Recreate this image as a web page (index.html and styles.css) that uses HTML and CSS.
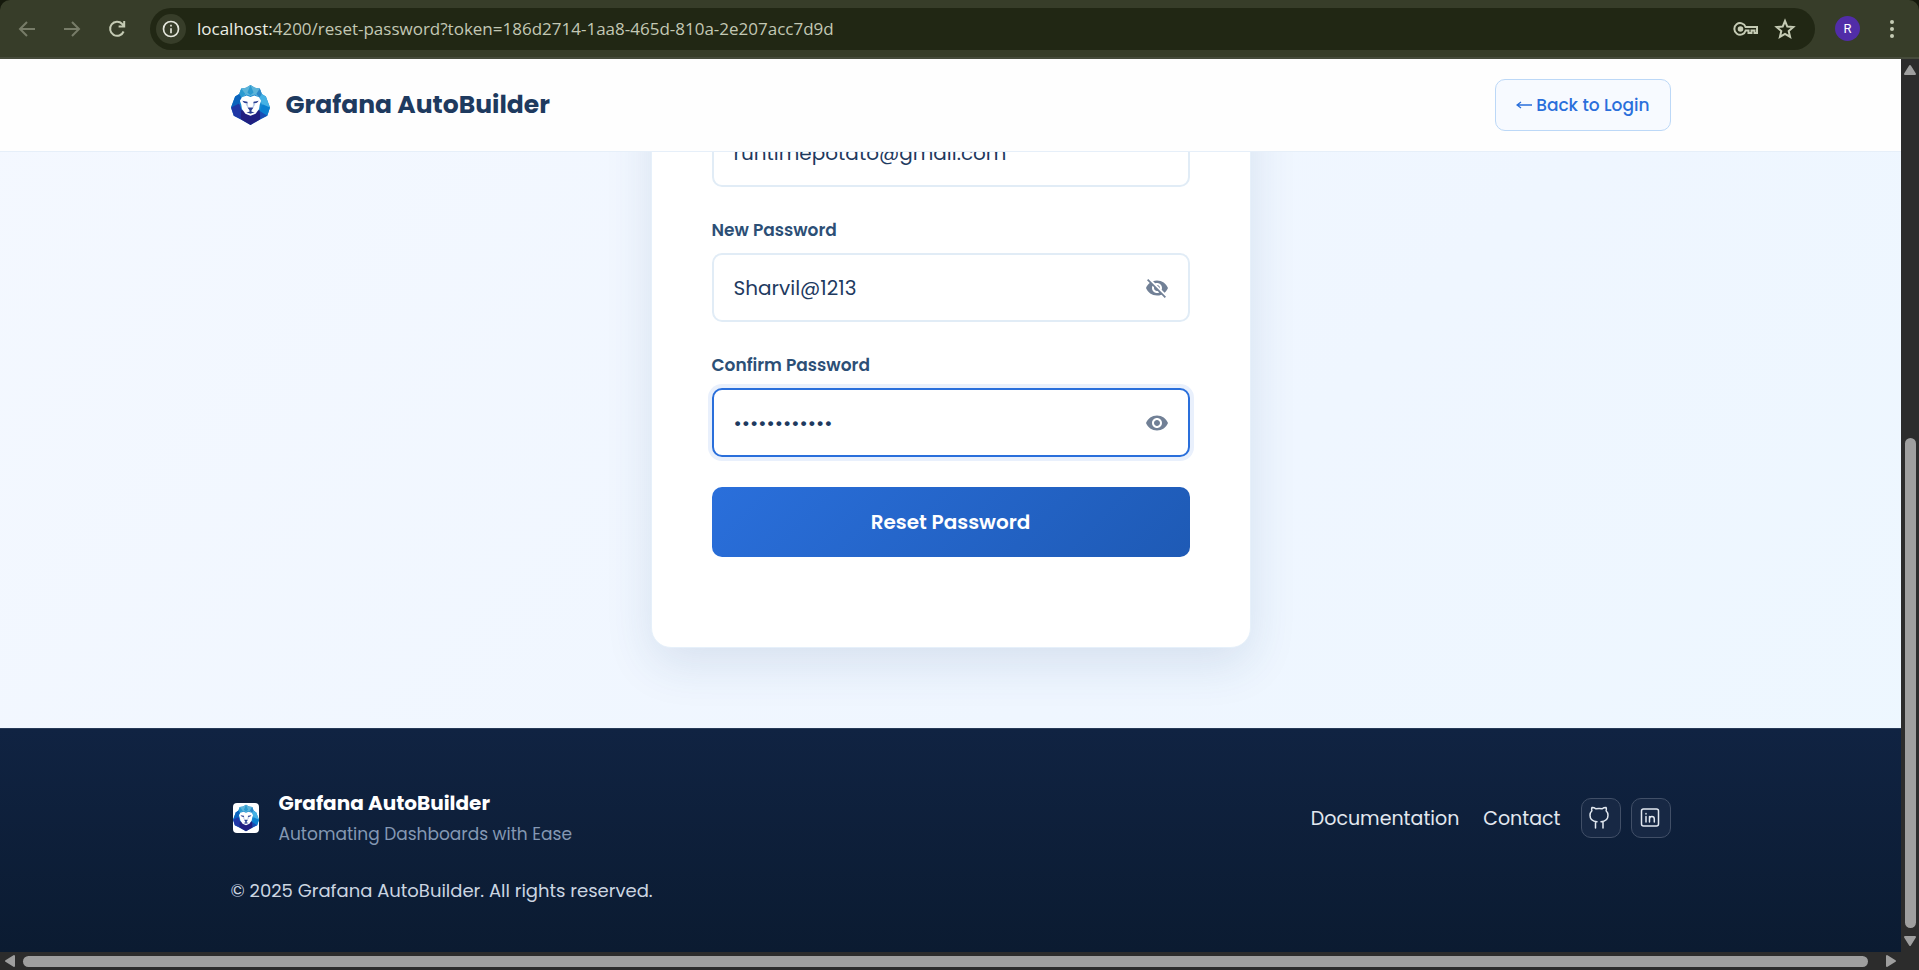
FILE: index.html
```html
<!DOCTYPE html>
<html lang="en">
<head>
<meta charset="utf-8">
<meta name="viewport" content="width=device-width, initial-scale=1">
<title>Grafana AutoBuilder</title>
<link rel="stylesheet" href="styles.css">
</head>
<body>
<svg class="defs" aria-hidden="true">
  <symbol id="lion" viewBox="0 0 114 117">
    <path fill="#1687cf" d="M57 0 70 8 84 10 90 26 102 34 114 66 106 90 86 100 57 117 28 100 8 90 0 66 12 34 24 26 30 10 44 8Z"/>
    <path fill="#5db4d9" d="M57 0 70 8 84 10 90 26 84 38 70 28 57 32 44 28 30 38 24 26 30 10 44 8Z"/>
    <path fill="#2b9ad0" d="M57 0 66 22 57 30 48 22ZM30 10 42 26 30 38 24 26Z"/>
    <path fill="#2a86c8" d="M84 10 74 26 84 38 90 26Z"/>
    <path fill="#0a63bd" d="M24 26 31 38 22 60 0 66 12 34Z"/>
    <path fill="#45b1e4" d="M90 26 83 38 92 62 114 66 102 34Z"/>
    <path fill="#0b7fd0" d="M92 56 114 66 106 90 84 80Z"/>
    <path fill="#1f37a5" d="M0 66 24 54 34 80 28 100 8 90Z"/>
    <path fill="#1a4db5" d="M84 76 106 90 86 100Z"/>
    <path fill="#211f80" d="M30 74 84 74 86 100 57 117 28 100Z"/>
    <path fill="#fff" d="M32 36 46 31 57 35 68 31 82 36 88 46 84 58 82 70 72 84 57 90 42 84 32 70 30 58 26 46Z"/>
    <path fill="#2a3f92" d="M33 46 48 49 49 55 38 52ZM81 46 66 49 65 55 76 52ZM48 66H66L60 74V78L69 80 57 84 45 80 54 78V74Z"/>
    <path fill="#b9cdea" d="M48 52 51 64H48L43 57ZM66 52 63 64H66L71 57Z"/>
  </symbol>
</svg>

<div class="toolbar">
  <nav class="toolbar-nav" aria-label="Browser">
    <button class="tool dim" aria-label="Back"><svg viewBox="0 0 24 24"><path d="M20 12H5M12 5l-7 7 7 7"/></svg></button>
    <button class="tool dim" aria-label="Forward"><svg viewBox="0 0 24 24"><path d="M4 12h15M12 5l7 7-7 7"/></svg></button>
    <button class="tool" aria-label="Reload"><svg viewBox="0 0 24 24"><path d="M18.600 14.500a7 7 0 1 1-1.400-7.500L19 8.800M19.200 4v5.600h-5.600"/></svg></button>
  </nav>
  <div class="address">
    <button class="site-info" aria-label="Site information"><svg viewBox="0 0 24 24"><circle cx="12" cy="12" r="9"/><path d="M12 11v6M12 7v2"/></svg></button>
    <div class="url"><span class="host">localhost:</span>4200/reset-password?token=186d2714-1aa8-465d-810a-2e207acc7d9d</div>
    <button class="tool" aria-label="Passwords"><svg class="key" viewBox="0 0 26 24"><path d="M12.600 10H24v6h-2.500v-2.500h-3V16h-3v-2.500h-2.800A5.800 5.800 0 1 1 12.600 10Z"/><circle cx="7.500" cy="12" r="1.800" fill="currentColor"/></svg></button>
    <button class="tool" aria-label="Bookmark"><svg viewBox="0 0 24 24"><path d="m12 4 2.300 5.600 6 .5-4.600 3.900 1.400 5.900L12 16.800l-5.100 3.100 1.400-5.900-4.600-3.900 6-.5Z"/></svg></button>
  </div>
  <button class="avatar" aria-label="Profile">R</button>
  <button class="tool" aria-label="Menu"><svg viewBox="0 0 24 24"><g fill="currentColor" stroke="none"><circle cx="12" cy="5" r="2"/><circle cx="12" cy="12" r="2"/><circle cx="12" cy="19" r="2"/></g></svg></button>
</div>

<div class="viewport">
  <div class="page">
    <header class="site-header">
      <div class="container header-row">
        <div class="brand"><svg class="brand-logo"><use href="#lion"/></svg><span class="brand-name">Grafana AutoBuilder</span></div>
        <a class="back-link" href="#"><svg viewBox="0 0 16 12"><path d="M16 6H1M5 3 1 6l4 3"/></svg>Back to Login</a>
      </div>
    </header>

    <main class="main">
      <form class="card">
        <div class="group">
          <div class="field"><input type="email" aria-label="Email" value="runtimepotato@gmail.com"></div>
        </div>
        <div class="group">
          <label for="new-password">New Password</label>
          <div class="field">
            <input id="new-password" type="text" value="Sharvil@1213">
            <button type="button" class="toggle" aria-label="Hide password"><svg viewBox="0 0 24 24"><path d="M12 7c2.760 0 5 2.240 5 5 0 .65-.13 1.260-.36 1.830l2.920 2.920c1.510-1.260 2.700-2.890 3.430-4.750-1.730-4.390-6-7.500-11-7.500-1.400 0-2.740.25-3.980.7l2.160 2.160C10.740 7.130 11.350 7 12 7zM2 4.270l2.280 2.280.46.46C3.080 8.300 1.780 10.020 1 12c1.730 4.390 6 7.500 11 7.500 1.550 0 3.030-.3 4.380-.84l.42.42L19.730 22 21 20.730 3.270 3 2 4.270zM7.530 9.800l1.550 1.550c-.05.21-.08.43-.08.65 0 1.660 1.340 3 3 3 .22 0 .44-.03.65-.08l1.550 1.550c-.67.33-1.410.53-2.200.53-2.760 0-5-2.240-5-5 0-.79.2-1.530.53-2.200zm4.310-.78l3.150 3.150.02-.16c0-1.660-1.340-3-3-3l-.17.01z"/></svg></button>
          </div>
        </div>
        <div class="group">
          <label for="confirm-password">Confirm Password</label>
          <div class="field active">
            <input id="confirm-password" type="password" value="Sharvil@1213">
            <button type="button" class="toggle" aria-label="Show password"><svg viewBox="0 0 24 24"><path d="M12 4.500C7 4.500 2.730 7.610 1 12c1.730 4.390 6 7.500 11 7.500s9.270-3.110 11-7.500c-1.730-4.390-6-7.500-11-7.500zM12 17c-2.760 0-5-2.240-5-5s2.240-5 5-5 5 2.240 5 5-2.240 5-5 5zm0-8c-1.660 0-3 1.340-3 3s1.340 3 3 3 3-1.340 3-3-1.340-3-3-3z"/></svg></button>
          </div>
        </div>
        <button type="submit" class="submit">Reset Password</button>
      </form>
    </main>

    <footer class="site-footer">
      <div class="container footer-inner">
        <div class="footer-row">
          <div class="footer-brand">
            <span class="footer-logo"><svg><use href="#lion"/></svg></span>
            <div class="footer-text">
              <div class="footer-name">Grafana AutoBuilder</div>
              <div class="tagline">Automating Dashboards with Ease</div>
            </div>
          </div>
          <nav class="footer-links" aria-label="Footer">
            <a class="text-link" href="#">Documentation</a>
            <a class="text-link" href="#">Contact</a>
            <span class="socials">
              <a class="social" href="#" aria-label="GitHub"><svg viewBox="0 0 38 38"><path d="M13.500 29v-6.300H15C10.500 22.500 8 19.800 8 16.300c0-1.900.7-3.300 1.900-4.500-.5-1.100-.4-2.300 0-3.300 1.700-.1 2.900.5 4.100 1.300 2.100-.5 4-.5 6 0 1.200-.8 2.400-1.400 4.100-1.300.4 1 .5 2.200 0 3.300 1.200 1.200 1.900 2.600 1.900 4.500 0 3.500-2.500 6.200-7 6.400H21V29"/></svg></a>
              <a class="social" href="#" aria-label="LinkedIn"><svg viewBox="0 0 38 38"><rect x="9.500" y="10" width="17" height="17" rx="2"/><path d="M14 17.500V23M14 14.500v.4M17.500 23v-5.500M17.500 20c0-3.300 4.800-3.300 4.800 0v3"/></svg></a>
            </span>
          </nav>
        </div>
        <div class="copyright">© 2025 Grafana AutoBuilder. All rights reserved.</div>
      </div>
    </footer>
  </div>
  <div class="scroll vertical" aria-hidden="true">
    <svg class="arrow" viewBox="0 0 14 12"><path d="M7 2 12 10H2Z"/></svg>
    <span class="track-space"></span><span class="thumb"></span>
    <svg class="arrow" viewBox="0 0 14 12"><path d="M2 2H12L7 10Z"/></svg>
  </div>
  <div class="scroll horizontal" aria-hidden="true">
    <svg class="arrow" viewBox="0 0 12 14"><path d="M2 7 10 2V12Z"/></svg>
    <span class="thumb"></span>
    <svg class="arrow" viewBox="0 0 12 14"><path d="M10 7 2 2V12Z"/></svg>
  </div>
  <div class="corner"></div>
</div>
</body>
</html>
```

FILE: styles.css
```css
* { box-sizing: border-box; }

body {
  margin: 0;
  height: 100vh;
  display: flex;
  flex-direction: column;
  overflow: hidden;
  background: #15190c;
  font-family: Poppins, Inter, sans-serif;
}

button { font: inherit; border: 0; padding: 0; background: none; color: inherit; }
a { text-decoration: none; }
svg { display: block; }
.defs { position: absolute; width: 0; height: 0; }

/* Browser toolbar */
.toolbar {
  flex: none;
  height: 59px;
  display: flex;
  align-items: center;
  gap: 20px;
  padding: 0 15px;
  background: #373d29;
  border-bottom: 2px solid #464b3b;
  border-radius: 10px 10px 0 0;
  color: #c5cbb4;
}
.toolbar-nav { display: flex; gap: 21px; margin-right: 1px; }
.tool svg {
  width: 24px;
  height: 24px;
  fill: none;
  stroke: currentColor;
  stroke-width: 2;
}
.tool .key { width: 26px; }
.dim { color: #777c68; }
.address {
  flex: 1;
  height: 42px;
  display: flex;
  align-items: center;
  gap: 14px;
  padding: 0 18px 0 6px;
  border-radius: 21px;
  background: #212714;
}
.site-info {
  width: 30px;
  height: 30px;
  display: grid;
  place-items: center;
  border-radius: 50%;
  background: #373d29;
  color: #e4e6dc;
}
.site-info svg { width: 20px; height: 20px; fill: none; stroke: currentColor; stroke-width: 2; }
.url {
  flex: 1;
  font-family: "Segoe UI", "Open Sans", sans-serif;
  font-size: 17px;
  color: #c3c8b4;
  white-space: nowrap;
  margin-left: -3px;
}
.host { color: #eceee5; }
.avatar {
  width: 25px;
  height: 25px;
  border-radius: 50%;
  background: #512da8;
  color: #fff;
  font-family: Roboto, sans-serif;
  font-size: 13px;
}

/* Page area with its scroll bars */
.viewport {
  flex: 1;
  min-height: 0;
  display: grid;
  grid-template: minmax(0, 1fr) 18px / minmax(0, 1fr) 18px;
}
.page {
  display: flex;
  flex-direction: column;
  min-height: 0;
  overflow: hidden;
  background: linear-gradient(135deg, #f4f8ff 0%, #eff6ff 60%, #edf7ff 100%);
}
.container { width: 100%; max-width: 1440px; margin: 0 auto; }

.site-header { flex: none; background: #fefefe; border-bottom: 1px solid #e6eff9; }
.header-row {
  display: flex;
  align-items: center;
  justify-content: space-between;
  padding: 20px 0;
}
.brand { display: flex; align-items: center; gap: 16px; }
.brand-logo { width: 39px; height: 40px; }
.brand-name { font-size: 25px; font-weight: 700; color: #1e3a5f; }
.back-link {
  height: 52px;
  display: flex;
  align-items: center;
  gap: 4px;
  padding: 0 20px;
  border: 1px solid #bcd8f7;
  border-radius: 10px;
  background: #f7faff;
  color: #2a6fdb;
  font-size: 17px;
  font-weight: 500;
}
.back-link svg { width: 16px; height: 12px; fill: none; stroke: currentColor; stroke-width: 1.3; }

.main {
  flex: 1;
  min-height: 0;
  display: flex;
  flex-direction: column;
  justify-content: flex-end;
  align-items: center;
  padding-bottom: 80px;
  overflow: hidden;
}
.card {
  flex: none;
  width: 600px;
  max-width: 100%;
  padding: 60px 60px 90px;
  background: #fff;
  border: 1px solid #e6f0fa;
  border-radius: 20px;
  box-shadow: 0 16px 48px rgba(30, 70, 120, 0.12);
}
.group { margin-bottom: 30px; }
.group label {
  display: block;
  margin-bottom: 10px;
  line-height: 26px;
  font-size: 17px;
  font-weight: 600;
  color: #2c4f76;
}
.field {
  height: 69px;
  display: flex;
  align-items: center;
  padding: 0 19px 0 20px;
  border: 2px solid #e1ecf6;
  border-radius: 10px;
  background: #fff;
}
.field.active { border-color: #2a6fdb; box-shadow: 0 0 0 4px #e9f0fc; }
.field input {
  flex: 1;
  min-width: 0;
  padding: 0;
  border: 0;
  outline: 0;
  background: none;
  color: #1e3a5f;
  font-family: inherit;
  font-size: 20px;
}
.toggle svg { width: 24px; height: 24px; fill: #718096; }
.submit {
  display: block;
  width: 100%;
  height: 70px;
  border-radius: 10px;
  background: linear-gradient(135deg, #2a6fdb, #1e5ab5);
  color: #fff;
  font-size: 20px;
  font-weight: 600;
}

.site-footer {
  flex: none;
  border-top: 1px solid #263a58;
  background: linear-gradient(180deg, #102342, #0b1b31);
}
.footer-inner { padding: 60px 0 48px; }
.footer-row { display: flex; align-items: center; justify-content: space-between; margin-bottom: 31px; }
.footer-brand { display: flex; align-items: center; gap: 20px; padding-left: 2px; }
.footer-logo {
  width: 26px;
  height: 30px;
  display: grid;
  place-items: center;
  border-radius: 4px;
  background: #fff;
}
.footer-logo svg { width: 26px; height: 28px; }
.footer-text { display: grid; gap: 4px; }
.footer-name { line-height: 28px; font-size: 20px; font-weight: 700; color: #fff; }
.tagline { line-height: 26px; font-size: 17px; color: #8498b3; }
.footer-links { display: flex; align-items: center; gap: 24px; }
.text-link { font-size: 19px; color: #e2e8f0; }
.socials { display: flex; gap: 10px; margin-left: -4px; }
.social {
  width: 40px;
  height: 40px;
  border: 1px solid #414f67;
  border-radius: 10px;
  background: #172844;
  color: #e2e8f0;
}
.social svg {
  width: 38px;
  height: 38px;
  fill: none;
  stroke: currentColor;
  stroke-width: 1.5;
  stroke-linecap: round;
  stroke-linejoin: round;
}
.copyright { line-height: 26px; font-size: 18px; color: #cbd5e1; }

/* Scroll bars */
.scroll { display: flex; align-items: center; background: #2c2c2c; }
.vertical { flex-direction: column; padding: 4px 0; }
.horizontal { padding: 0 3px; gap: 6px; }
.arrow { flex: none; width: 14px; height: 14px; fill: #9f9f9f; stroke: #9f9f9f; stroke-width: 2; stroke-linejoin: round; }
.thumb { border-radius: 6px; background: #9f9f9f; }
.track-space { flex: 361; }
.vertical .thumb { flex: 491; width: 11px; margin-bottom: 6px; }
.horizontal .thumb { flex: 1; height: 11px; margin-right: 10px; }
.corner { background: #2c2c2c; }
```
